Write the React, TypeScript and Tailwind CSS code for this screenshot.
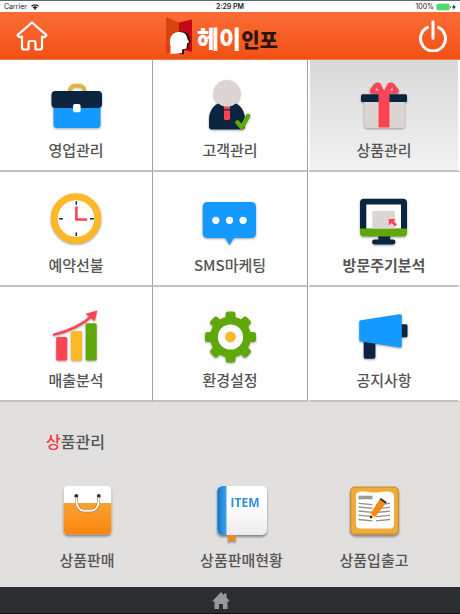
import { ReactNode, useState } from 'react'
import clsx from 'clsx'

const ICON = 'block w-[60px] h-[60px] drop-shadow-[0_1px_1px_rgba(0,0,0,0.35)]'
const NAVY = '#0b2540'
const BLUE = '#1499ff'
const GREEN = '#5fa80a'
const RED = '#fd4452'
const YELLOW = '#fdb827'
const SAND = '#ddd5d4'

function BriefcaseIcon() {
  return (
    <svg viewBox="0 0 60 60" className={ICON} aria-hidden="true">
      <path d="M24 19v-2.500a5 5 0 0 1 5-5h4.500a5 5 0 0 1 5 5V19" fill="none" stroke="#e9b52d" strokeWidth="3.600" />
      <path d="M7.500 32h47v18.500a3.500 3.500 0 0 1-3.500 3.500H11a3.500 3.500 0 0 1-3.500-3.500z" fill={BLUE} />
      <rect x="5.500" y="17" width="50.500" height="17" rx="4" fill={NAVY} />
      <rect x="27" y="30" width="7.600" height="8.300" rx="2" fill="#fff" />
    </svg>
  )
}

function CustomerIcon() {
  return (
    <svg viewBox="0 0 60 60" className={ICON} aria-hidden="true">
      <path d="M9 52.500v-7C9 37 14 29.500 21 29h12c7 .5 12 8 12 16.500v7a3 3 0 0 1-3 3H12a3 3 0 0 1-3-3z" fill={NAVY} />
      <path d="M24 31h6v4.300h-6zM24 36.500h6v8.500l-1 1h-4l-1-1z" fill={RED} />
      <circle cx="27" cy="19.300" r="13.300" fill={SAND} />
      <path d="M37.500 48.500l4.300 5 6.200-11.500" fill="none" stroke={GREEN} strokeWidth="4.500" strokeLinecap="round" strokeLinejoin="round" />
    </svg>
  )
}

function GiftIcon() {
  return (
    <svg viewBox="0 0 60 60" className={ICON} aria-hidden="true">
      <path d="M10.300 27h40.400v24a3 3 0 0 1-3 3H13.300a3 3 0 0 1-3-3z" fill={SAND} />
      <rect x="7" y="20.300" width="46" height="7.700" rx="1.500" fill={NAVY} />
      <path d="M24.500 20h11v33.500h-11z" fill={RED} />
      <path d="M30 20l-11-.2c-3.500 0-4-3-2.300-5.300l3.300-4.300c2.800-3 6.500-1.500 7.500 1.500l2.600 5.300 2.600-5.300c1-3 4.900-4.500 7.700-1.500l3.300 4.300c2 2.300 1.300 5.300-2.200 5.300z" fill={RED} />
      <path d="M22 13.500l3 3.200h-3.500zM38.500 13.500l-3 3.200H39z" fill="#e6c4c6" />
    </svg>
  )
}

function ClockIcon() {
  return (
    <svg viewBox="0 0 60 60" className={ICON} aria-hidden="true">
      <circle cx="30" cy="29.500" r="21.800" fill="#fff" stroke={YELLOW} strokeWidth="7" />
      <path d="M30.300 12.300v3.500M30.300 43.500v3.500M13 29.800h3.800M44 29.800h3.800" stroke={NAVY} strokeWidth="1.500" />
      <path d="M30.400 17.500v13h10.800" fill="none" stroke={RED} strokeWidth="2.600" />
    </svg>
  )
}

function MessageIcon() {
  return (
    <svg viewBox="0 0 60 60" className={ICON} aria-hidden="true">
      <path d="M7.200 13h44.300a4.500 4.500 0 0 1 4.500 4.500v27a4.500 4.500 0 0 1-4.500 4.500H34l-4.500 7-4.500-7H7.200a4.500 4.500 0 0 1-4.500-4.500v-27A4.500 4.500 0 0 1 7.200 13z" fill={BLUE} />
      <circle cx="15.800" cy="31.300" r="3.600" fill="#fff" />
      <circle cx="29.500" cy="31.300" r="3.600" fill="#fff" />
      <circle cx="43.100" cy="31.300" r="3.600" fill="#fff" />
    </svg>
  )
}

function MonitorIcon() {
  return (
    <svg viewBox="0 0 60 60" className={ICON} aria-hidden="true">
      <path d="M24 46.500h12.500l-.5 4h3a2.400 2.400 0 0 1 0 4.900H20.500a2.400 2.400 0 0 1 0-4.900h4z" fill={NAVY} />
      <path d="M10 9.700h39a4 4 0 0 1 4 4V41H6V13.700a4 4 0 0 1 4-4z" fill={NAVY} />
      <path d="M6 39.600h47v4a4 4 0 0 1-4 4H10a4 4 0 0 1-4-4z" fill={GREEN} />
      <path d="M12.300 15.600H47v24H12.300z" fill="#fff" />
      <path d="M18.300 22h22.500v17.600H18.300z" fill={SAND} />
      <path d="M34.700 30h7l-2 2 3.300 3.600-1.900 1.900-3.600-3.500-2.800 2.800z" fill={RED} />
    </svg>
  )
}

function ChartIcon() {
  return (
    <svg viewBox="0 0 60 60" className={ICON} aria-hidden="true">
      <rect x="10.200" y="33" width="11" height="23.500" rx="1.600" fill={RED} />
      <rect x="25" y="27" width="11" height="29.500" rx="1.600" fill={YELLOW} />
      <rect x="39.700" y="19.300" width="11" height="37.200" rx="1.600" fill={GREEN} />
      <path d="M7 30.800C22 27.500 35 22 46.500 11.500" fill="none" stroke={RED} strokeWidth="2.400" />
      <path d="M51.200 6.500l-11.700 3.300 9.300 7.400z" fill={RED} />
    </svg>
  )
}

function GearIcon() {
  return (
    <svg viewBox="0 0 60 60" className={ICON} aria-hidden="true">
      <g fill={GREEN}>
        {[0, 45, 90, 135].map(a => (
          <rect key={a} x="25.600" y="7.500" width="9.800" height="51" rx="2.500" transform={`rotate(${a} 30.500 33)`} />
        ))}
        <circle cx="30.500" cy="33" r="20.500" />
      </g>
      <circle cx="30.500" cy="33" r="12.600" fill="#fff" />
      <circle cx="30.500" cy="33" r="5.400" fill={YELLOW} />
    </svg>
  )
}

function MegaphoneIcon() {
  return (
    <svg viewBox="0 0 60 60" className={ICON} aria-hidden="true">
      <rect x="9.700" y="34" width="11.700" height="20.700" rx="1.800" fill={NAVY} />
      <rect x="45" y="20.300" width="8.500" height="13" rx="1.500" fill={NAVY} />
      <path d="M7 16.300l38.500-6c1.500-.2 2.300.6 2.300 2v29.200c0 1.500-.8 2.200-2.300 2L7 37.600c-1.200-.2-1.800-.9-1.800-2v-17.400c0-1.100.6-1.700 1.800-1.900z" fill={BLUE} />
    </svg>
  )
}

const LARGE_ICON = 'block w-16 h-16 drop-shadow-[0_2px_1px_rgba(0,0,0,0.4)]'

function BagIcon() {
  return (
    <svg viewBox="0 0 64 64" className={LARGE_ICON} aria-hidden="true">
      <defs>
        <linearGradient id="bag" x1="0" y1="0" x2="0" y2="1">
          <stop offset="0" stopColor="#f9a135" />
          <stop offset="1" stopColor="#fb860a" />
        </linearGradient>
      </defs>
      <rect x="8.700" y="6" width="47.600" height="48.300" rx="4.500" fill="#fff" />
      <path d="M8.700 23h47.600v26.800a4.500 4.500 0 0 1-4.500 4.500H13.200a4.500 4.500 0 0 1-4.500-4.500z" fill="url(#bag)" />
      <circle cx="21.300" cy="16" r="2" fill="#333" />
      <circle cx="43.800" cy="16" r="2" fill="#333" />
      <path d="M21.300 17.500c0 9 2.500 13.300 8 13.300h6.500c5.500 0 8-4.300 8-13.300" fill="none" stroke="#8a6a48" strokeWidth="2.800" />
      <path d="M21.300 17.500c0 9 2.500 13.300 8 13.300h6.500c5.500 0 8-4.300 8-13.300" fill="none" stroke="#fff6e8" strokeWidth="2" />
    </svg>
  )
}

function BookIcon() {
  return (
    <svg viewBox="0 0 64 64" className={LARGE_ICON} aria-hidden="true">
      <defs>
        <linearGradient id="spine">
          <stop offset="0" stopColor="#1273c9" />
          <stop offset="1" stopColor="#3fa2ee" />
        </linearGradient>
        <linearGradient id="cover" x1="0" y1="0" x2="0" y2="1">
          <stop offset="0.400" stopColor="#fff" />
          <stop offset="1" stopColor="#ececee" />
        </linearGradient>
      </defs>
      <path d="M18 52h7.500v10l-3.800-2.500L18 62z" fill="#f58a1c" />
      <rect x="7.200" y="6" width="49.800" height="49" rx="5" fill="url(#cover)" />
      <path d="M16.500 6v49h-4a5.300 5.300 0 0 1-5.300-5.300V11.300A5.300 5.300 0 0 1 12.500 6z" fill="url(#spine)" />
      <text x="35" y="27" textAnchor="middle" fontFamily="'Open Sans', sans-serif" fontSize="12" fontWeight="700" fill="#2f8fdc">
        ITEM
      </text>
    </svg>
  )
}

function NoteIcon() {
  return (
    <svg viewBox="0 0 64 64" className={LARGE_ICON} aria-hidden="true">
      <rect x="8.600" y="7.200" width="47.800" height="47" rx="4.500" fill="#f0ab38" stroke="#cf8d34" strokeWidth="1.200" />
      <path d="M17 12c5-1.500 10 .6 15.500.6S44 10.500 48.500 12c2 .5 3.500 1.500 3.500 3.500v29c0 2.500-1.500 4-4 4H18c-2.500 0-4-1.500-4-4v-29c0-2 1-3 3-3.500z" fill="#fffefb" />
      <path d="M16.500 17.500h14" stroke="#9a9a9a" strokeWidth="3.600" />
      <path
        d="M16.500 23.300l14 1.400M16.500 27l14 1.400M16.500 31l14 1.400M16.500 35.200l14 1.400M16.500 39.500l14 1.400M34 24.700l14-1.400M34 28.700l14-1.400M34 32.500l14-1.400M34 36.700l14-1.400M34 40.900l14-1.400"
        stroke="#8f8f94"
        strokeWidth="1.300"
      />
      <path d="M37.500 19.500l6 4.200-10.500 13.500-4.500-3.400z" fill="#f58a14" />
      <path d="M37.500 19.500l1.300-1.500 6 4-1.300 1.700z" fill="#2b3a2e" />
      <path d="M28.500 33.800l4.500 3.400-5 1.800z" fill="#f3d5a4" />
      <circle cx="29" cy="37" r="1.200" fill="#222" />
    </svg>
  )
}

type Menu = { label: string; icon: ReactNode; strong?: boolean }

const MENUS: Menu[] = [
  { label: '영업관리', icon: <BriefcaseIcon /> },
  { label: '고객관리', icon: <CustomerIcon /> },
  { label: '상품관리', icon: <GiftIcon /> },
  { label: '예약선불', icon: <ClockIcon /> },
  { label: 'SMS마케팅', icon: <MessageIcon /> },
  { label: '방문주기분석', icon: <MonitorIcon />, strong: true },
  { label: '매출분석', icon: <ChartIcon /> },
  { label: '환경설정', icon: <GearIcon /> },
  { label: '공지사항', icon: <MegaphoneIcon /> },
]

const SUB_MENUS: Menu[] = [
  { label: '상품판매', icon: <BagIcon /> },
  { label: '상품판매현황', icon: <BookIcon /> },
  { label: '상품입출고', icon: <NoteIcon /> },
]

function StatusBar() {
  return (
    <div className="grid grid-cols-3 items-center h-3 px-1 border-t border-[#66666a] bg-white font-['Inter',sans-serif] text-[7px] leading-none text-[#222]">
      <div className="flex items-center gap-1">
        <span>Carrier</span>
        <svg viewBox="0 0 16 12" className="w-2 h-1.5" fill="none" stroke="#111" strokeWidth="2.500" aria-hidden="true">
          <path d="M1 4.500a10 10 0 0 1 14 0M4 7.800a6 6 0 0 1 8 0" />
          <path d="M8 12l-2.500-2.500a3.500 3.500 0 0 1 5 0z" fill="#111" stroke="none" />
        </svg>
      </div>
      <span className="text-center font-semibold">2:29 PM</span>
      <div className="flex items-center justify-end gap-0.5">
        <span>100%</span>
        <svg viewBox="0 0 20 8" className="w-5 h-2" aria-hidden="true">
          <rect x="0.500" y="0.800" width="13" height="6.400" rx="1.500" fill="#4cd964" stroke="#a9d8b0" strokeWidth="0.600" />
          <path d="M14.500 3v2" stroke="#888" />
          <path d="M18.500 1l-2.500 3.500h1.700L17.300 7l2.500-3.500h-1.700z" fill="#111" />
        </svg>
      </div>
    </div>
  )
}

function Header() {
  return (
    <header className="flex items-center justify-between h-12 pl-4 pr-3 bg-linear-to-b from-[#fa6c34] to-[#f25012] border-b border-[#f47a4c]">
      <button aria-label="홈">
        <svg viewBox="0 0 32 30" className="block w-8 h-[30px]" fill="none" stroke="#fff" strokeWidth="2.200" strokeLinejoin="round" aria-hidden="true">
          <path d="M16 1.500L1.500 14.200l2 2 2.500-.7v11a2 2 0 0 0 2 2h4.500v-6.500a2 2 0 0 1 2-2h3a2 2 0 0 1 2 2v6.500H24a2 2 0 0 0 2-2v-11l2.500.7 2-2z" />
        </svg>
      </button>
      <h1 className="flex items-center gap-1 mr-[22px] whitespace-nowrap">
        <svg viewBox="0 0 27 38" className="block w-[27px] h-[38px]" aria-hidden="true">
          <path d="M0 0l13 5.500V32L0 37z" fill="#d8430f" />
          <path d="M13 5.500L26 2.500V35l-13-3z" fill="#c40818" />
          <path d="M14 15c5-1.500 9 1.500 9 5l2 5-2.500 1.500-.5 5-4 1v5l-5-1z" fill="#2a0e12" />
          <path d="M4.500 37v-8C2.500 22 5.500 15.500 12 15c6-.5 9 2.500 9 6l2 4-2 1.500-.5 5-4.500 1v3.500z" fill="#fff" />
        </svg>
        <span className="flex items-baseline pt-1 font-black">
          <span className="text-2xl leading-none text-white">헤이</span>
          <span className="text-xl leading-none text-[#2b1409]">인포</span>
        </span>
      </h1>
      <button aria-label="종료">
        <svg viewBox="0 0 30 32" className="block w-[30px] h-8" fill="none" stroke="#fff" strokeWidth="3" strokeLinecap="round" aria-hidden="true">
          <path d="M15 1.800v16.500M9.500 7.300a12.500 12.500 0 1 0 11 0" />
        </svg>
      </button>
    </header>
  )
}

export default function App() {
  const [selected, setSelected] = useState('상품관리')

  return (
    <div className="w-full min-h-screen flex flex-col bg-[#e1e0de] font-['Noto_Sans_CJK_KR',sans-serif] text-[#555]">
      <StatusBar />
      <Header />

      {/* Main menu */}
      <nav className="grid grid-cols-[153fr_155fr_152fr] bg-white">
        {MENUS.map((m, i) => (
          <button
            key={m.label}
            onClick={() => setSelected(m.label)}
            className={clsx(
              'flex flex-col items-center gap-1 pb-2 border-b-2 border-[#c4c1bf]',
              i < 3 ? 'pt-3.5' : 'pt-[17px]',
              i % 3 < 2 ? 'border-r border-r-[#aaa29f]' : 'border-x-2 border-x-white',
              selected === m.label && 'bg-linear-to-b from-[#d9d9d9] to-[#f1f1f1]',
            )}
          >
            {m.icon}
            <span className={clsx('text-[15px] leading-6', m.strong ? 'font-bold' : 'font-medium')}>{m.label}</span>
          </button>
        ))}
      </nav>

      {/* Sub menu of the selected item */}
      <section className="flex-1 pt-[27px]">
        <h2 className="pl-[46px] text-base leading-6 font-medium">
          <span className="text-[#fb2f45]">{selected.charAt(0)}</span>
          {selected.slice(1)}
        </h2>
        <div className="grid grid-cols-[174fr_135fr_130fr] pt-[27px] pr-[21px]">
          {SUB_MENUS.map(m => (
            <button key={m.label} className="flex flex-col items-center gap-1">
              {m.icon}
              <span className="text-[15px] leading-6 font-medium whitespace-nowrap">{m.label}</span>
            </button>
          ))}
        </div>
      </section>

      <footer className="flex items-center justify-center h-[27px] pr-[18px] bg-[#2b2d31] border-b border-[#111]">
        <button aria-label="메인으로">
          <svg viewBox="0 0 18 17" className="block w-[18px] h-[17px]" fill="#98999b" aria-hidden="true">
            <path d="M9 0l3 3V1.500h2.500v4L18 9.500h-2.500V17H11v-5H7v5H2.500V9.500H0z" />
          </svg>
        </button>
      </footer>
    </div>
  )
}
